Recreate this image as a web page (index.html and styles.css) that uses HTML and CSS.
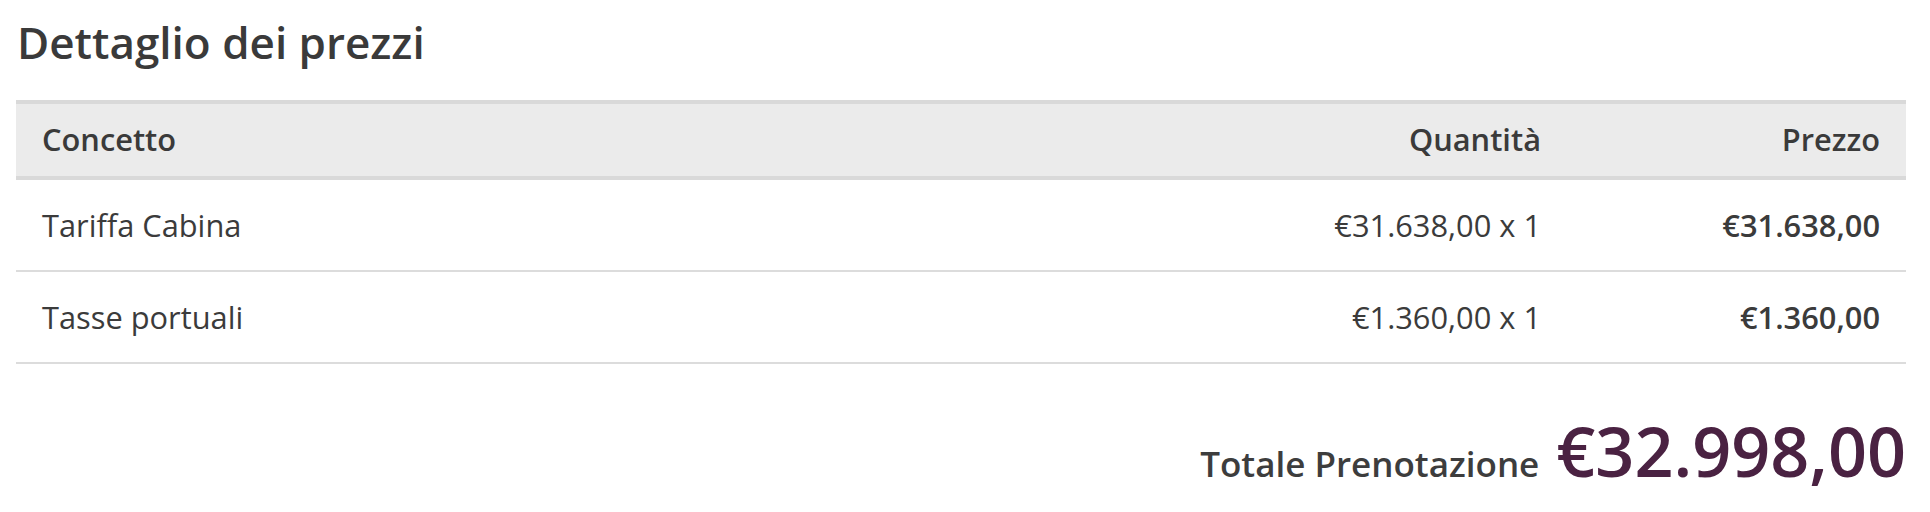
FILE: index.html
```html
<!DOCTYPE html>
<html lang="it">
<head>
<meta charset="utf-8">
<title>Dettaglio dei prezzi</title>
<link rel="stylesheet" href="styles.css">
</head>
<body>
<section class="price-detail">
  <h1 class="title">Dettaglio dei prezzi</h1>
  <div class="table">
    <div class="row head">
      <div class="cell">Concetto</div>
      <div class="cell num">Quantità</div>
      <div class="cell num">Prezzo</div>
    </div>
    <div class="row">
      <div class="cell">Tariffa Cabina</div>
      <div class="cell num">€31.638,00 x 1</div>
      <div class="cell num strong">€31.638,00</div>
    </div>
    <div class="row">
      <div class="cell">Tasse portuali</div>
      <div class="cell num">€1.360,00 x 1</div>
      <div class="cell num strong">€1.360,00</div>
    </div>
  </div>
  <div class="total">
    <span class="total-label">Totale Prenotazione</span>
    <span class="total-amount">€32.998,00</span>
  </div>
</section>
</body>
</html>
```

FILE: styles.css
```css
html, body {
  margin: 0;
  padding: 0;
  background: #ffffff;
}

body {
  font-family: "Open Sans", "Liberation Sans", sans-serif;
  color: #3b3b3b;
}

.price-detail {
  padding: 14px 24px 0 16px;
}

.title {
  margin: 0 0 30px 0;
  font-size: 44px;
  line-height: 56px;
  font-weight: 600;
  color: #3a3a3a;
  padding-left: 1px;
}

.table {
  display: flex;
  flex-direction: column;
}

.row {
  display: grid;
  grid-template-columns: 1fr 420px 339px;
  border-bottom: 2px solid #dcdcdc;
}

.cell {
  font-size: 30.8px;
  line-height: 44px;
  padding: 23px 26px 23px 26px;
  white-space: nowrap;
}

.num {
  text-align: right;
}

.strong {
  font-weight: 600;
}

.row.head {
  background: #ebebeb;
  border-top: 4px solid #d9d9d9;
  border-bottom: 4px solid #d9d9d9;
}

.row.head .cell {
  font-weight: 600;
  padding-top: 13px;
  padding-bottom: 15px;
  color: #3a3a3a;
}

.total {
  display: flex;
  justify-content: flex-end;
  align-items: baseline;
  gap: 17px;
  margin-top: 47px;
}

.total-label {
  font-size: 35px;
  font-weight: 600;
  color: #3d3d3d;
}

.total-amount {
  font-size: 68.3px;
  line-height: 80px;
  font-weight: 600;
  color: #4a2242;
}
```
